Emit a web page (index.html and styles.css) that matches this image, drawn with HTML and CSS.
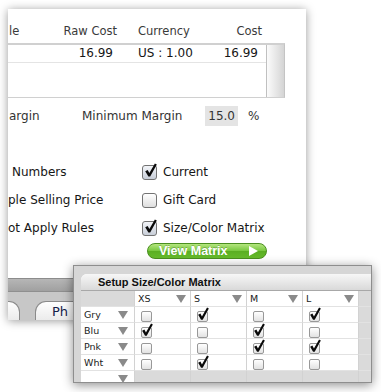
FILE: index.html
```html
<!DOCTYPE html>
<html lang="en">
<head>
<meta charset="UTF-8" />
<title>Item Costs — Size/Color Matrix</title>
<link rel="stylesheet" href="styles.css">
</head>
<body>

<svg class="defs" aria-hidden="true">
  <symbol id="chk" viewBox="0 0 16 18">
    <polygon points="1.5,10 4.5,8.3 6.6,12.2 13.4,0.4 15.8,1.6 7.6,16.5 5.4,16.5" fill="#0a0a0a" />
  </symbol>
</svg>

<div class="desk">

  <div class="win">
    <div class="row head">
      <span class="c-name">le</span>
      <span class="c-raw">Raw Cost</span>
      <span></span>
      <span class="c-cur">Currency</span>
      <span class="c-cost">Cost</span>
    </div>
    <div class="table">
      <div class="rows">
        <div class="row data">
          <span class="c-name"></span>
          <span class="c-raw">16.99</span>
          <span></span>
          <span class="c-cur">US : 1.00</span>
          <span class="c-cost">16.99</span>
        </div>
      </div>
      <div class="scroll"></div>
    </div>

    <div class="margin">
      <span class="m-lbl">argin</span>
      <span class="m-min">Minimum Margin</span>
      <span class="field">15.0</span>
      <span class="pct">%</span>
    </div>

    <div class="opts">
      <span class="opt-l first">Numbers</span>
      <label class="opt"><span class="cb on"><svg><use href="#chk" /></svg></span>Current</label>
      <span class="opt-l">ple Selling Price</span>
      <label class="opt"><span class="cb"></span>Gift Card</label>
      <span class="opt-l">ot Apply Rules</span>
      <label class="opt"><span class="cb on"><svg><use href="#chk" /></svg></span>Size/Color Matrix</label>
      <span></span>
      <button class="view">View Matrix <i class="play"></i></button>
    </div>

    <div class="spacer"></div>
    <div class="bar"></div>
    <div class="tabs">
      <div class="tab first"></div>
      <div class="tab">Ph</div>
    </div>
  </div>

  <div class="mwin">
    <div class="mpanel">
      <div class="mtitle">Setup Size/Color Matrix</div>
      <div class="grid">
        <div class="g grey"></div>
        <div class="g">XS<i class="tri"></i></div>
        <div class="g">S<i class="tri"></i></div>
        <div class="g">M<i class="tri"></i></div>
        <div class="g">L<i class="tri"></i></div>
        <div class="g pad"></div>

        <div class="g clr">Gry<i class="tri"></i></div>
        <div class="g"><span class="sb"></span></div>
        <div class="g"><span class="sb"><svg><use href="#chk" /></svg></span></div>
        <div class="g"><span class="sb"></span></div>
        <div class="g"><span class="sb"><svg><use href="#chk" /></svg></span></div>
        <div class="g pad"></div>

        <div class="g clr">Blu<i class="tri"></i></div>
        <div class="g"><span class="sb"><svg><use href="#chk" /></svg></span></div>
        <div class="g"><span class="sb"></span></div>
        <div class="g"><span class="sb"><svg><use href="#chk" /></svg></span></div>
        <div class="g"><span class="sb"></span></div>
        <div class="g pad"></div>

        <div class="g clr">Pnk<i class="tri"></i></div>
        <div class="g"><span class="sb"></span></div>
        <div class="g"><span class="sb"></span></div>
        <div class="g"><span class="sb"><svg><use href="#chk" /></svg></span></div>
        <div class="g"><span class="sb"><svg><use href="#chk" /></svg></span></div>
        <div class="g pad"></div>

        <div class="g clr">Wht<i class="tri"></i></div>
        <div class="g"><span class="sb"></span></div>
        <div class="g"><span class="sb"><svg><use href="#chk" /></svg></span></div>
        <div class="g"><span class="sb"></span></div>
        <div class="g"><span class="sb"></span></div>
        <div class="g pad"></div>

        <div class="g clr"><i class="tri"></i></div>
        <div class="g grey"></div>
        <div class="g grey"></div>
        <div class="g grey"></div>
        <div class="g grey"></div>
        <div class="g pad"></div>
      </div>
    </div>
  </div>

</div>

</body>
</html>
```

FILE: styles.css
```css
body {
  margin: 0;
  background: #fff;
  font-family: "DejaVu Sans", sans-serif;
  font-size: 12px;
  color: #161616;
}
.defs {
  position: absolute;
  width: 0;
  height: 0;
}
.desk {
  position: relative;
  width: 381px;
  height: 392px;
  overflow: hidden;
}

/* main window */
.win {
  margin: 9px 0 0 8px;
  width: 298px;
  height: 311px;
  background: #fff;
  box-shadow: 0 1px 9px rgba(0,0,0,0.4);
  display: flex;
  flex-direction: column;
  overflow: hidden;
}
.row {
  display: grid;
  grid-template-columns: 41px 68px 21px 60px 64px;
  white-space: nowrap;
}
.head {
  height: 34px;
  box-sizing: border-box;
  align-items: end;
  padding-bottom: 4px;
  line-height: 16px;
  font-size: 11.5px;
  color: #3a3a3a;
}
.c-name {
  padding-left: 1px;
}
.c-raw, .c-cost {
  text-align: right;
}
.data .c-raw, .data .c-cost {
  padding-right: 4px;
}
.table {
  width: 277px;
  height: 55px;
  box-sizing: border-box;
  border-top: 2px solid #d0d0d0;
  border-right: 1px solid #c4c4c4;
  border-bottom: 1px solid #d0d0d0;
  display: flex;
}
.rows {
  flex: 1;
}
.data {
  height: 18px;
  line-height: 17px;
  border-bottom: 1px solid #e4e4e4;
  box-sizing: border-box;
}
.scroll {
  width: 17px;
  border-left: 1px solid #c0c0c0;
  background: linear-gradient(90deg, #fbfbfb, #e8e8e8 50%, #d4d4d4);
}

.margin {
  display: grid;
  grid-template-columns: 74px 123px 33px auto;
  align-items: center;
  height: 20px;
  margin-top: 8px;
  color: #333;
  white-space: nowrap;
}
.m-lbl {
  padding-left: 1px;
}
.field {
  height: 20px;
  line-height: 20px;
  background: #e4e4e4;
  text-align: right;
  padding-right: 3px;
  box-sizing: border-box;
}
.pct {
  margin-left: 10px;
}

.opts {
  display: grid;
  grid-template-columns: 134px auto;
  grid-template-rows: 28px 28px 28px auto;
  align-items: center;
  margin-top: 32px;
  white-space: nowrap;
}
.opt-l.first {
  padding-left: 4px;
}
.opt {
  display: flex;
  align-items: center;
}
.cb {
  position: relative;
  width: 15px;
  height: 15px;
  box-sizing: border-box;
  margin-right: 6px;
  border: 1px solid #737373;
  border-radius: 3px;
  background: linear-gradient(#ffffff, #dedede);
}
.cb.on {
  background: linear-gradient(#f3f5f9, #c8ced8);
}
.cb svg {
  position: absolute;
  left: 1px;
  top: -3px;
  width: 13px;
  height: 15px;
}
.view {
  margin: 1px 0 0 5px;
  width: 120px;
  height: 16px;
  padding: 0 8px 0 11px;
  box-sizing: border-box;
  display: flex;
  align-items: center;
  justify-content: space-between;
  border: 1px solid #4a8f1f;
  border-radius: 9px;
  background: linear-gradient(#b4e67e, #79c840 48%, #5aae22 52%, #66bb2c);
  color: #fff;
  font: bold 12.5px "Liberation Sans", sans-serif;
  text-shadow: 0 -1px 0 rgba(0,0,0,0.2);
}
.play {
  width: 0;
  height: 0;
  border-left: 9px solid #fff;
  border-top: 5px solid transparent;
  border-bottom: 5px solid transparent;
}

.spacer {
  flex: 1;
}
.bar {
  height: 14px;
  box-sizing: border-box;
  border-top: 1px solid #8c8c8c;
  border-bottom: 1px solid #8f8f8f;
  background: linear-gradient(#b6b6b6, #a0a0a0);
}
.tabs {
  height: 28px;
  background: #c7c7c7;
  display: flex;
  align-items: flex-end;
  gap: 15px;
}
.tab {
  height: 19px;
  width: 90px;
  box-sizing: border-box;
  padding: 1px 0 0 16px;
  border: 1px solid #8a8a8a;
  border-bottom: none;
  border-radius: 11px 11px 0 0;
  background: linear-gradient(#fefefe, #ebebeb);
  font-size: 13px;
  line-height: 17px;
  color: #13204a;
}
.tab.first {
  width: 52px;
  margin-left: -40px;
}

/* matrix window */
.mwin {
  position: absolute;
  left: 73px;
  top: 265px;
  width: 299px;
  height: 118px;
  box-sizing: border-box;
  padding: 8px 0 0 7px;
  border: 1px solid #8e8e8e;
  background: #d6d6d6;
  box-shadow: 0 2px 10px rgba(0,0,0,0.45);
}
.mpanel {
  height: 100%;
  background: #fff;
  border-top-left-radius: 6px;
  overflow: hidden;
}
.mtitle {
  height: 17px;
  box-sizing: border-box;
  padding-left: 17px;
  border-bottom: 1px solid #a8a8a8;
  background: linear-gradient(#f7f7f7, #d9d9d9);
  font: bold 11px "Liberation Sans", sans-serif;
  line-height: 16px;
  color: #111;
}
.grid {
  display: grid;
  grid-template-columns: 54px 56px 56px 56px 56px 12px;
  grid-auto-rows: 16px;
  font-size: 9.5px;
  color: #222;
}
.g {
  position: relative;
  display: flex;
  align-items: center;
  padding-left: 3px;
  box-sizing: border-box;
  border-right: 1px solid #d2d2d2;
  border-bottom: 1px solid #e2e2e2;
}
.g.grey, .g.pad {
  background: #dadada;
}
.g.pad {
  border-right: none;
}
.tri {
  position: absolute;
  right: 4px;
  top: 4px;
  width: 0;
  height: 0;
  border-left: 5px solid transparent;
  border-right: 5px solid transparent;
  border-top: 8px solid #8a8a8a;
}
.clr .tri {
  right: 6px;
}
.sb {
  position: relative;
  width: 11px;
  height: 11px;
  box-sizing: border-box;
  margin: 3px 0 0 3px;
  border: 1px solid #989898;
  border-radius: 2px;
  background: linear-gradient(#ffffff, #e2e2e2);
}
.sb svg {
  position: absolute;
  left: -1px;
  top: -5px;
  width: 12px;
  height: 14px;
}
```
